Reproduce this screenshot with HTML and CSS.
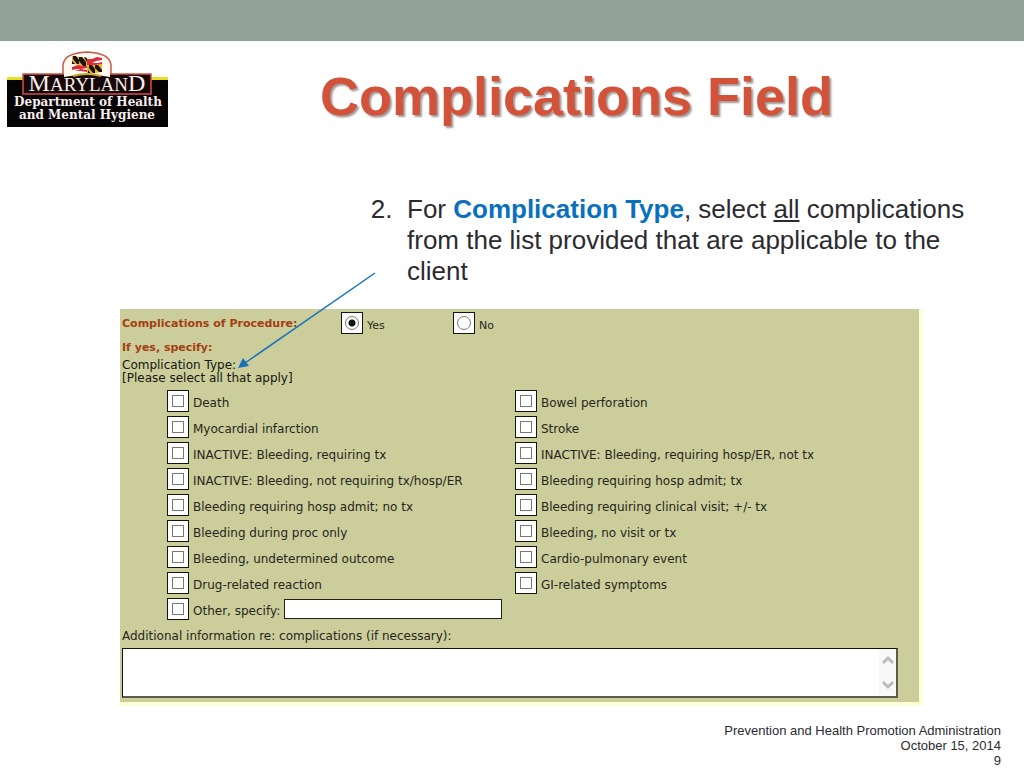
FILE: index.html
```html
<!DOCTYPE html>
<html lang="en">
<head>
<meta charset="utf-8">
<title>Complications Field</title>
<link rel="stylesheet" href="styles.css">
</head>
<body>
<div class="topbar"></div>
<header class="header">
  <svg class="logo" viewBox="0 0 161 77" role="img" aria-label="Maryland Department of Health and Mental Hygiene">
    <rect y="27" width="161" height="4" fill="#e6df20"/>
    <rect y="30" width="161" height="47" fill="#050303"/>
    <path d="M56 26V15Q57 3 80 2Q103 3 104 15V26Z" fill="#fff8ee" stroke="#c9574a" stroke-width="1.5"/>
    <g transform="translate(65 6)">
      <path d="M0 0L15 2L30 0V16L15 18L0 15Z" fill="#fff"/>
      <path d="M0 0L15 2V10L0 8Z" fill="#e8b624"/>
      <path d="M15 9L30 8V16L15 18Z" fill="#e8b624"/>
      <path d="M1 0h3l3 4v4H5L1 3zM7 1h3l4 5v4h-3L7 5zM0 5l3 3H0zM12 1l3 1v4zM17 9h3l3 4v4h-2l-4-5zM23 9h3l4 5v2h-3l-4-4zM16 14l3 4h-3z" fill="#181008"/>
      <path d="M15 3l5 0l5-2l5 1v2l-6 1l-4 2h6l4-1v2l-8 1h-7zM0 11l6-2l6 1h3v2l-6 1h-4l-5 1zM3 15l6-2l6 1v2l-6-1z" fill="#d92b3a"/>
    </g>
    <rect x="16" y="24" width="128" height="20" fill="#160808" stroke="#d05248" stroke-width="1.5"/>
    <path d="M57 27V23H103V27Q80 22 57 27Z" fill="#fff8ee"/>
    <path d="M66 26Q80 22 94 26" fill="none" stroke="#c7a52e" stroke-width="2"/>
    <text x="80" y="41" text-anchor="middle" class="logo-state"><tspan class="logo-cap">M</tspan>ARYLAN<tspan class="logo-cap">D</tspan></text>
    <text x="81" y="56" text-anchor="middle" class="logo-line">Department of Health</text>
    <text x="80" y="69" text-anchor="middle" class="logo-line">and Mental Hygiene</text>
  </svg>
  <h1 class="title">Complications Field</h1>
</header>
<main class="content">
  <ol class="steps" start="2">
    <li>For <strong>Complication Type</strong>, select <u>all</u> complications from the list provided that are applicable to the client</li>
  </ol>
  <form class="panel">
    <svg class="arrow" viewBox="0 0 140 98" aria-hidden="true">
      <path d="M137 1L7 91" fill="none" stroke="#1673ba" stroke-width="1.5"/>
      <path d="M0 96L5 86L11 94Z" fill="#1673ba"/>
    </svg>
    <div class="question" role="radiogroup" aria-labelledby="procedure">
      <span class="heading" id="procedure">Complications of Procedure:</span>
      <label class="option"><input type="radio" name="complications" class="radio" checked><span>Yes</span></label>
      <label class="option"><input type="radio" name="complications" class="radio"><span>No</span></label>
    </div>
    <p class="heading specify">If yes, specify:</p>
    <p class="type">Complication Type:<br>[Please select all that apply]</p>
    <div class="choices">
      <label class="option"><span class="frame"><input type="checkbox" class="check"></span><span>Death</span></label>
      <label class="option"><span class="frame"><input type="checkbox" class="check"></span><span>Bowel perforation</span></label>
      <label class="option"><span class="frame"><input type="checkbox" class="check"></span><span>Myocardial infarction</span></label>
      <label class="option"><span class="frame"><input type="checkbox" class="check"></span><span>Stroke</span></label>
      <label class="option"><span class="frame"><input type="checkbox" class="check"></span><span>INACTIVE: Bleeding, requiring tx</span></label>
      <label class="option"><span class="frame"><input type="checkbox" class="check"></span><span>INACTIVE: Bleeding, requiring hosp/ER, not tx</span></label>
      <label class="option"><span class="frame"><input type="checkbox" class="check"></span><span>INACTIVE: Bleeding, not requiring tx/hosp/ER</span></label>
      <label class="option"><span class="frame"><input type="checkbox" class="check"></span><span>Bleeding requiring hosp admit; tx</span></label>
      <label class="option"><span class="frame"><input type="checkbox" class="check"></span><span>Bleeding requiring hosp admit; no tx</span></label>
      <label class="option"><span class="frame"><input type="checkbox" class="check"></span><span>Bleeding requiring clinical visit; +/- tx</span></label>
      <label class="option"><span class="frame"><input type="checkbox" class="check"></span><span>Bleeding during proc only</span></label>
      <label class="option"><span class="frame"><input type="checkbox" class="check"></span><span>Bleeding, no visit or tx</span></label>
      <label class="option"><span class="frame"><input type="checkbox" class="check"></span><span>Bleeding, undetermined outcome</span></label>
      <label class="option"><span class="frame"><input type="checkbox" class="check"></span><span>Cardio-pulmonary event</span></label>
      <label class="option"><span class="frame"><input type="checkbox" class="check"></span><span>Drug-related reaction</span></label>
      <label class="option"><span class="frame"><input type="checkbox" class="check"></span><span>GI-related symptoms</span></label>
      <div class="other">
        <label class="option"><span class="frame"><input type="checkbox" class="check"></span><span>Other, specify:</span></label>
        <input type="text" class="other-text" aria-label="Other, specify">
      </div>
    </div>
    <label class="notes-label" for="notes">Additional information re: complications (if necessary):</label>
    <div class="notes">
      <textarea id="notes" class="notes-text"></textarea>
      <div class="scroll" aria-hidden="true">
        <svg class="chevron" viewBox="0 0 14 10"><path d="M2 8L7 3L12 8" fill="none" stroke="#bcbcbc" stroke-width="3"/></svg>
        <svg class="chevron" viewBox="0 0 14 10"><path d="M2 2L7 7L12 2" fill="none" stroke="#bcbcbc" stroke-width="3"/></svg>
      </div>
    </div>
  </form>
</main>
<footer class="footer">
  <div>Prevention and Health Promotion Administration</div>
  <div>October 15, 2014</div>
  <div>9</div>
</footer>
</body>
</html>
```
FILE: styles.css
```css
* { box-sizing: border-box; }
body {
  margin: 0;
  background: #fff;
  color: #2b2b30;
  font-family: "Liberation Sans", Arial, sans-serif;
}
.topbar { height: 41px; background: #92a19a; }
.header {
  display: flex;
  align-items: flex-start;
  padding: 9px 39px 0 7px;
}
.logo { flex: none; width: 161px; height: 77px; }
.logo-state { font-family: "Liberation Serif", serif; fill: #f7eeee; font-size: 19px; }
.logo-cap { font-size: 24px; }
.logo-line { font-family: "DejaVu Serif", serif; fill: #f7eeee; font-size: 12px; font-weight: bold; }
.title {
  flex: 1;
  margin: 0;
  padding-top: 14px;
  color: #d3533a;
  font-size: 54px;
  line-height: 64px;
  text-align: center;
  text-shadow: 2px 2px 2px #a09a98;
}
.content { padding: 66px 101px 0 120px; }
.steps {
  margin: 0 -60px 0 247px;
  padding-left: 40px;
  font-size: 26px;
  line-height: 31px;
}
.steps li::marker { content: "2.\00a0\00a0"; }
.steps strong { color: #0a70bd; }
.panel {
  position: relative;
  margin-top: 22px;
  padding: 3px 21px 4px 2px;
  background: #cbcd9b;
  border: solid #ffffd6;
  border-width: 0 4px 4px 0;
  color: #26261c;
  font-family: "DejaVu Sans", Verdana, sans-serif;
  font-size: 12px;
  line-height: 13px;
}
.arrow {
  position: absolute;
  top: -37px;
  left: 118px;
  width: 140px;
  height: 98px;
  pointer-events: none;
}
.question {
  display: grid;
  grid-template-columns: 219px 112px 1fr;
}
.heading { margin: 0; color: #a43f12; font-size: 11px; font-weight: bold; }
.question .heading { padding-top: 5px; }
.question .option { font-size: 11px; }
.specify { padding-top: 7px; }
.type { margin: 5px 0; color: #16160e; }
.option { display: flex; align-items: center; gap: 4px; }
.option > span:last-child { padding-top: 5px; }
.radio, .frame {
  flex: none;
  width: 22px;
  height: 22px;
  margin: 0;
  border: 1px solid #15150c;
  background: #fff;
}
.radio {
  appearance: none;
  display: grid;
  place-items: center;
}
.radio::before {
  content: "";
  width: 12px;
  height: 12px;
  border: 1px solid #777;
  border-radius: 50%;
}
.radio:checked::before {
  background: radial-gradient(circle, #111 0 3px, #fff 4px);
}
.frame { display: grid; place-items: center; }
.check {
  appearance: none;
  width: 12px;
  height: 12px;
  margin: 0;
  border: 1px solid #77777c;
}
.choices {
  display: grid;
  grid-template-columns: 348px 1fr;
  row-gap: 4px;
  padding-left: 45px;
}
.other { display: flex; align-items: center; gap: 4px; }
.other-text {
  width: 218px;
  height: 20px;
  border: 1px solid #22221a;
  background: #fff;
  font: inherit;
}
.notes-label { display: block; padding-top: 10px; color: #26261c; }
.notes {
  display: flex;
  height: 50px;
  margin-top: 5px;
  border: 1px solid #111;
  border-width: 1px 2px 2px 1px;
  border-color: #111 #5a5b48 #5a5b48 #111;
  background: #fff;
}
.notes-text {
  flex: 1;
  padding: 4px;
  border: 0;
  background: transparent;
  font: inherit;
  resize: none;
}
.scroll {
  display: flex;
  flex-direction: column;
  justify-content: space-between;
  align-items: center;
  width: 17px;
  padding: 6px 0;
  background: #f8f8f8;
}
.chevron { width: 14px; height: 10px; }
.footer {
  padding: 17px 23px 0;
  font-size: 13px;
  line-height: 15px;
  text-align: right;
}
```
